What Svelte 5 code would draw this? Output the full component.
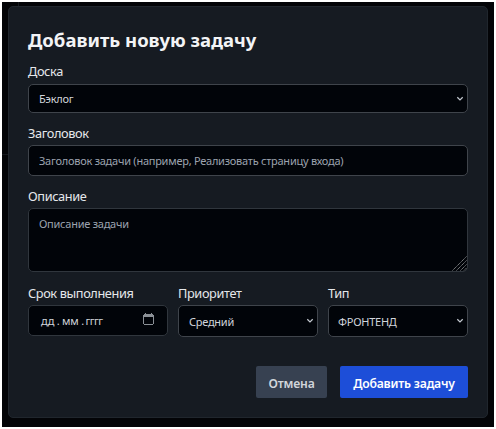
<script>
  const priorities = ['Средний'];
  const types = ['ФРОНТЕНД'];
</script>

{#snippet chevron()}
  <svg class="chevron" width="8" height="6" viewBox="0 0 8 6"><path d="M1.3 1.3 4 3.9 6.7 1.3" fill="none" stroke="#c2c7ce" stroke-width="1.3" /></svg>
{/snippet}

<div class="frame">
  <div class="backdrop">
    <i class="rule-v"></i>
    <i class="rule-h"></i>
    <form class="modal">
      <h2>Добавить новую задачу</h2>

      <label class="first" for="board">Доска</label>
      <div class="select board">
        <select id="board"><option>Бэклог</option></select>
        {@render chevron()}
      </div>

      <label for="title">Заголовок</label>
      <input id="title" placeholder="Заголовок задачи (например, Реализовать страницу входа)" />

      <label for="desc">Описание</label>
      <div class="area">
        <textarea id="desc" placeholder="Описание задачи"></textarea>
        <svg class="grip" width="15" height="15" viewBox="0 0 15 15"><path d="M.5 14.5 14.5 .5M4.5 14.5 14.5 4.5M8.5 14.5 14.5 8.5M12 14.5 14.5 12" stroke="#858789" stroke-width="1" stroke-dasharray="1.4 .5" fill="none" /></svg>
      </div>

      <div class="row">
        <div class="col">
          <span class="label due">Срок выполнения</span>
          <div class="date">
            <span>дд</span><span class="dot">.</span><span>мм</span><span class="dot">.</span><span class="year">гггг</span>
            <svg width="11" height="12" viewBox="0 0 11 12" shape-rendering="crispEdges"><path d="M1 1h9v1h1v9h-1v1H1v-1H0V2h1zM1 4v7h9V4zM2 0h1v1H2zM8 0h1v1H8z" fill="#8b9096" fill-rule="evenodd" /></svg>
          </div>
        </div>
        <div class="col">
          <label for="priority">Приоритет</label>
          <div class="select">
            <select id="priority">{#each priorities as p}<option>{p}</option>{/each}</select>
            {@render chevron()}
          </div>
        </div>
        <div class="col">
          <label for="type">Тип</label>
          <div class="select">
            <select id="type" class="type">{#each types as t}<option>{t}</option>{/each}</select>
            {@render chevron()}
          </div>
        </div>
      </div>

      <div class="actions">
        <button type="button" class="cancel">Отмена</button>
        <button type="button" class="submit">Добавить задачу</button>
      </div>
    </form>
  </div>
</div>

<style>
  * { box-sizing: border-box; }
  .frame { width: 496px; height: 429px; padding: 2px; background: #fff; font-family: 'Noto Sans', 'Open Sans', sans-serif; }
  .backdrop { position: relative; width: 492px; height: 425px; padding: 4px 6px; background: #030407; }
  .rule-v { position: absolute; left: 16px; top: 0; width: 1px; height: 4px; background: #15181d; }
  .rule-h { position: absolute; left: 0; top: 152px; width: 6px; height: 1px; background: #15181d; }
  .modal { width: 480px; height: 412px; padding: 21px 19px 0; background: #161b22; border: 1px solid #20262d; border-radius: 5px; }
  h2 { margin: 0 0 11px; font-size: 18.5px; line-height: 24px; font-weight: 700; color: #f3f4f6; white-space: nowrap; }
  label, .label { display: block; height: 21px; line-height: 18px; font-size: 12.75px; letter-spacing: -0.38px; color: #e5e7eb; white-space: nowrap; }
  .first { line-height: 16px; }
  .due { letter-spacing: -0.38px; }
  select, input, textarea, .date { display: block; width: 100%; margin: 0; border: 1px solid #3f444b; border-radius: 5px; background: #010409; color: #d1d5db; font-family: inherit; font-size: 11px; letter-spacing: -0.25px; padding: 0 10px; outline: none; }
  select { appearance: none; height: 32px; }
  select.type { padding-left: 9px; }
  .select { position: relative; }
  .board { margin-bottom: 11px; }
  .board select { height: 29px; }
  .chevron { position: absolute; right: 4px; top: 50%; margin-top: -3px; }
  input { height: 31px; margin-bottom: 11px; }
  input::placeholder, textarea::placeholder { color: #9ca3af; opacity: 1; }
  .area { position: relative; height: 64px; margin-bottom: 12px; }
  textarea { height: 64px; padding: 7px 10px; line-height: 16px; resize: none; border-color: #30363d; }
  .grip { position: absolute; right: 1px; bottom: 1px; }
  .row { display: flex; gap: 10px; }
  .col { width: 140px; }
  .date { display: flex; align-items: center; height: 31px; padding: 0 12px; border-color: #30363d; }
  .dot { width: 8px; text-align: center; }
  .date .year { margin-left: -1px; letter-spacing: -0.6px; }
  .date svg { margin-left: auto; margin-right: 1px; margin-top: -3px; }
  .actions { display: flex; justify-content: flex-end; gap: 13px; margin-top: 29px; }
  button { height: 32px; padding: 2px 0 0; border: 0; border-radius: 2px; font-family: inherit; font-size: 12.2px; font-weight: 600; letter-spacing: -0.15px; white-space: nowrap; }
  .cancel { width: 71px; background: #374151; color: #d1d5db; }
  .submit { width: 128px; background: #1d4ed8; color: #fff; letter-spacing: -0.2px; }
</style>
